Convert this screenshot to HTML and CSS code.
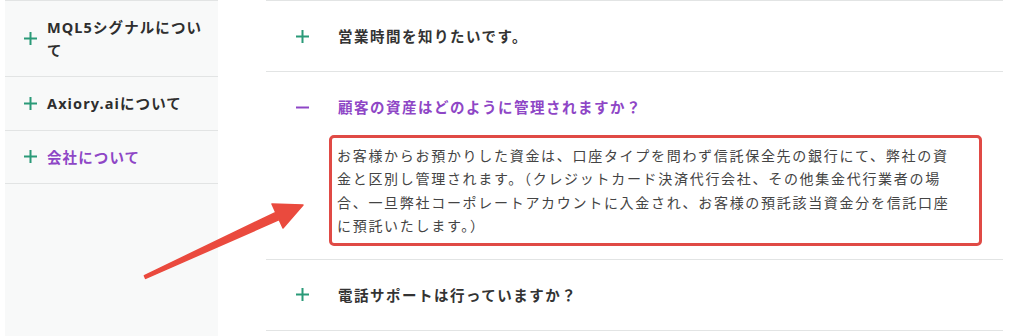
FILE: index.html
```html
<!DOCTYPE html>
<html lang="ja">
<head>
<meta charset="utf-8">
<link rel="stylesheet" href="styles.css">
</head>
<body>
<div class="page">
  <aside class="side">
    <div class="side-item">
      <svg class="plus" viewBox="0 0 13 13"><path d="M6.5 0v13M0 6.5h13"/></svg>
      <span class="side-text">MQL5シグナルについて</span>
    </div>
    <div class="side-item">
      <svg class="plus" viewBox="0 0 13 13"><path d="M6.5 0v13M0 6.5h13"/></svg>
      <span class="side-text">Axiory.aiについて</span>
    </div>
    <div class="side-item">
      <svg class="plus" viewBox="0 0 13 13"><path d="M6.5 0v13M0 6.5h13"/></svg>
      <span class="side-text active">会社について</span>
    </div>
  </aside>
  <main class="faq">
    <div class="faq-item">
      <div class="q">
        <svg class="plus" viewBox="0 0 13 13"><path d="M6.5 0v13M0 6.5h13"/></svg>
        <span class="q-text">営業時間を知りたいです。</span>
      </div>
    </div>
    <div class="faq-item open">
      <div class="q">
        <svg class="minus" viewBox="0 0 13 13"><path d="M0 6.5h13"/></svg>
        <span class="q-text active">顧客の資産はどのように管理されますか？</span>
      </div>
      <div class="answer">お客様からお預かりした資金は、口座タイプを問わず信託保全先の銀行にて、弊社の資金と区別し管理されます。（クレジットカード決済代行会社、その他集金代行業者の場合、一旦弊社コーポレートアカウントに入金され、お客様の預託該当資金分を信託口座に預託いたします。）</div>
    </div>
    <div class="faq-item">
      <div class="q">
        <svg class="plus" viewBox="0 0 13 13"><path d="M6.5 0v13M0 6.5h13"/></svg>
        <span class="q-text">電話サポートは行っていますか？</span>
      </div>
    </div>
  </main>
  <svg class="arrow" width="1024" height="336" viewBox="0 0 1024 336">
    <polygon points="144.4,275.6 275.8,212.4 272,204 303,205 283,228 279.2,219.6 145.6,278.4"/>
  </svg>
</div>
</body>
</html>
```

FILE: styles.css
```css
html, body {
  margin: 0;
  padding: 0;
  background: #ffffff;
}
body {
  font-family: "Noto Sans", "Noto Sans CJK JP", sans-serif;
  color: #333333;
}
.page {
  position: relative;
  display: flex;
  align-items: stretch;
  width: 1024px;
  height: 336px;
  overflow: hidden;
}
.side {
  margin-left: 5px;
  width: 213px;
  background: #f8f9f9;
  border-top: 1px solid #e2e4e4;
}
.side-item {
  display: flex;
  align-items: center;
  gap: 10px;
  padding: 15px 0 15px 19px;
  border-bottom: 1px solid #e2e4e4;
}
.side-text {
  font-weight: 700;
  font-size: 14.5px;
  line-height: 22.5px;
  letter-spacing: 1.1px;
  color: #2e2e2e;
  width: 163px;
}
.side-text.active, .q-text.active {
  color: #8e46c6;
}
.plus, .minus {
  flex: none;
  width: 13px;
  height: 13px;
  stroke-width: 2;
  fill: none;
}
.plus { stroke: #2a9a78; }
.minus { stroke: #8e46c6; }
.faq {
  margin-left: 48px;
  width: 737px;
  border-top: 1px solid #e2e4e4;
}
.faq-item {
  border-bottom: 1px solid #e2e4e4;
}
.q {
  display: flex;
  align-items: center;
  gap: 29px;
  padding: 24px 0 24px 30px;
}
.q-text {
  font-weight: 700;
  font-size: 14.5px;
  line-height: 22px;
  letter-spacing: 1.5px;
  color: #333333;
}
.open .q {
  padding-bottom: 17px;
}
.answer {
  margin: 0 21px 13px 63px;
  border: 3px solid #e04a45;
  border-radius: 5px;
  padding: 6px 21px 5px 5px;
  font-size: 14px;
  line-height: 23.4px;
  letter-spacing: 1.7px;
  color: #444444;
}
.arrow {
  position: absolute;
  left: 0;
  top: 0;
  pointer-events: none;
}
.arrow polygon {
  fill: #ea4a3e;
  stroke: #ea4a3e;
  stroke-width: 1.5;
  stroke-linejoin: round;
}
```
